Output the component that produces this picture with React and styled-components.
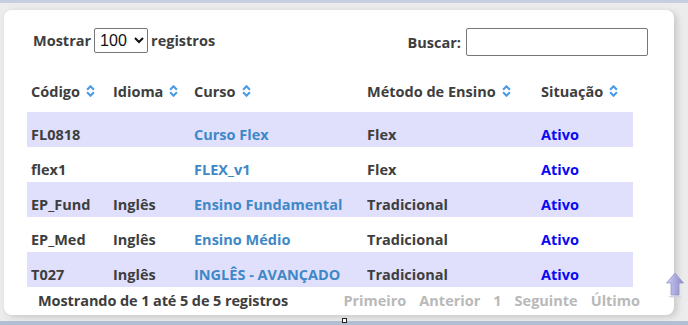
import React from 'react';
import styled, { createGlobalStyle } from 'styled-components';

const GlobalStyle = createGlobalStyle`
  html, body {
    margin: 0;
    padding: 0;
    background: #ececec;
    font-family: 'Open Sans', 'Noto Sans', sans-serif;
    overflow: hidden;
  }
`;

const cursos = [
  { codigo: 'FL0818', idioma: '', curso: 'Curso Flex', metodo: 'Flex', situacao: 'Ativo' },
  { codigo: 'flex1', idioma: '', curso: 'FLEX_v1', metodo: 'Flex', situacao: 'Ativo' },
  { codigo: 'EP_Fund', idioma: 'Inglês', curso: 'Ensino Fundamental', metodo: 'Tradicional', situacao: 'Ativo' },
  { codigo: 'EP_Med', idioma: 'Inglês', curso: 'Ensino Médio', metodo: 'Tradicional', situacao: 'Ativo' },
  { codigo: 'T027', idioma: 'Inglês', curso: 'INGLÊS - AVANÇADO', metodo: 'Tradicional', situacao: 'Ativo' },
];

const colunas = [
  { titulo: 'Código', largura: 82 },
  { titulo: 'Idioma', largura: 81 },
  { titulo: 'Curso', largura: 173 },
  { titulo: 'Método de Ensino', largura: 174 },
  { titulo: 'Situação', largura: 96 },
];

function SortIcon() {
  return (
    <svg width="9" height="12" viewBox="0 0 9 12" fill="none">
      <path d="M1.1 4.8 L4.5 1.3 L7.9 4.8" stroke="#4a9ae6" strokeWidth="2.1" />
      <path d="M1.1 7.2 L4.5 10.7 L7.9 7.2" stroke="#4a9ae6" strokeWidth="2.1" />
    </svg>
  );
}

function TopoIcon() {
  return (
    <svg width="18" height="26" viewBox="0 0 18 26">
      <defs>
        <linearGradient id="setaGrad" x1="0" y1="0" x2="1" y2="0">
          <stop offset="0" stopColor="#cfcff0" />
          <stop offset="0.5" stopColor="#ababde" />
          <stop offset="1" stopColor="#8c8cc6" />
        </linearGradient>
      </defs>
      <path
        d="M9 1 L17.5 11 L13 11 L13 23 L5 23 L5 11 L0.5 11 Z"
        fill="url(#setaGrad)"
        stroke="#9797cd"
        strokeWidth="0.8"
      />
      <ellipse cx="9" cy="24.6" rx="6.5" ry="1" fill="#d2d2e0" />
    </svg>
  );
}

function App() {
  return (
    <>
      <GlobalStyle />
      <Page>
        <TopBar />
        <Area>
          <Card>
            <Controls>
              <Label>
                Mostrar
                <Select defaultValue="100">
                  <option>10</option>
                  <option>25</option>
                  <option>50</option>
                  <option>100</option>
                </Select>
                registros
              </Label>
              <Label>
                Buscar:
                <SearchInput type="text" />
              </Label>
            </Controls>
            <Table>
              <colgroup>
                {colunas.map(c => (
                  <col key={c.titulo} style={{ width: c.largura }} />
                ))}
              </colgroup>
              <thead>
                <tr>
                  {colunas.map(c => (
                    <Th key={c.titulo}>
                      <HeadInner>
                        {c.titulo}
                        <SortIcon />
                      </HeadInner>
                    </Th>
                  ))}
                </tr>
              </thead>
              <tbody>
                {cursos.map((item, i) => (
                  <Row key={item.codigo} $odd={i % 2 === 0}>
                    <Td>{item.codigo}</Td>
                    <Td>{item.idioma}</Td>
                    <Td>
                      <CursoLink href="#">{item.curso}</CursoLink>
                    </Td>
                    <Td>{item.metodo}</Td>
                    <Td>
                      <Status>{item.situacao}</Status>
                    </Td>
                  </Row>
                ))}
              </tbody>
            </Table>
            <Footer>
              <Info>Mostrando de 1 até 5 de 5 registros</Info>
              <Paging>
                <PageBtn>Primeiro</PageBtn>
                <PageBtn>Anterior</PageBtn>
                <PageBtn>1</PageBtn>
                <PageBtn>Seguinte</PageBtn>
                <PageBtn>Último</PageBtn>
              </Paging>
            </Footer>
          </Card>
          <ToTop>
            <TopoIcon />
          </ToTop>
        </Area>
        <BottomBar>
          <Marker />
        </BottomBar>
      </Page>
    </>
  );
}

const Page = styled.div`
  width: 688px;
  height: 325px;
  display: flex;
  flex-direction: column;
  position: relative;
`;

const TopBar = styled.div`
  height: 3px;
  background: #c6cfe2;
`;

const Area = styled.div`
  flex: 1;
  padding: 7px 14px 0 4px;
`;

const Card = styled.div`
  background: #fff;
  border-radius: 8px;
  height: 305px;
  box-sizing: border-box;
  box-shadow: 3px 2px 7px rgba(0, 0, 0, 0.16);
  padding: 18px 0 0 23px;
  color: #3e3e3e;
  font-weight: 700;
  font-size: 14.5px;
`;

const Controls = styled.div`
  display: flex;
  justify-content: space-between;
  align-items: flex-start;
  width: 621px;
  padding-left: 6px;
  box-sizing: border-box;
`;

const Label = styled.label`
  display: flex;
  align-items: center;
  gap: 4px;
  height: 28px;
  &:first-child {
    height: 25px;
    gap: 3px;
  }
`;

const Select = styled.select`
  font-family: 'Liberation Sans', Arial, sans-serif;
  font-size: 16px;
  width: 54px;
  height: 25px;
  border: 1px solid #767676;
  border-radius: 2px;
  background: #fff;
  color: #111;
  padding: 0 1px;
`;

const SearchInput = styled.input`
  width: 182px;
  height: 28px;
  box-sizing: border-box;
  border: 1px solid #767676;
  border-radius: 2px;
  margin-left: 1px;
`;

const Table = styled.table`
  width: 606px;
  border-collapse: collapse;
  table-layout: fixed;
  margin-top: 14px;
`;

const Th = styled.th`
  text-align: left;
  height: 42px;
  padding: 0 4px;
  box-sizing: border-box;
  vertical-align: middle;
`;

const HeadInner = styled.span`
  display: inline-flex;
  align-items: center;
  gap: 6px;
  white-space: nowrap;
`;

const Row = styled.tr`
  background: ${p => (p.$odd ? '#e0e0fc' : '#fff')};
`;

const Td = styled.td`
  height: 35px;
  padding: 9px 4px 0;
  box-sizing: border-box;
  white-space: nowrap;
`;

const CursoLink = styled.a`
  color: #3f88c8;
  text-decoration: none;
`;

const Status = styled.span`
  color: #0a0af2;
`;

const Footer = styled.div`
  display: flex;
  justify-content: space-between;
  align-items: center;
  width: 613px;
  height: 26px;
  padding-left: 11px;
  box-sizing: border-box;
`;

const Info = styled.div`
  letter-spacing: -0.1px;
`;

const Paging = styled.div`
  display: flex;
  gap: 13px;
`;

const PageBtn = styled.span`
  color: #b9b9b9;
`;

const ToTop = styled.div`
  position: absolute;
  left: 666px;
  top: 272px;
`;

const BottomBar = styled.div`
  height: 4px;
  background: #b2bed2;
  position: relative;
`;

const Marker = styled.span`
  position: absolute;
  left: 342px;
  top: -3px;
  width: 3px;
  height: 3px;
  border: 1px solid #222;
  background: #fff;
`;

export default App;
